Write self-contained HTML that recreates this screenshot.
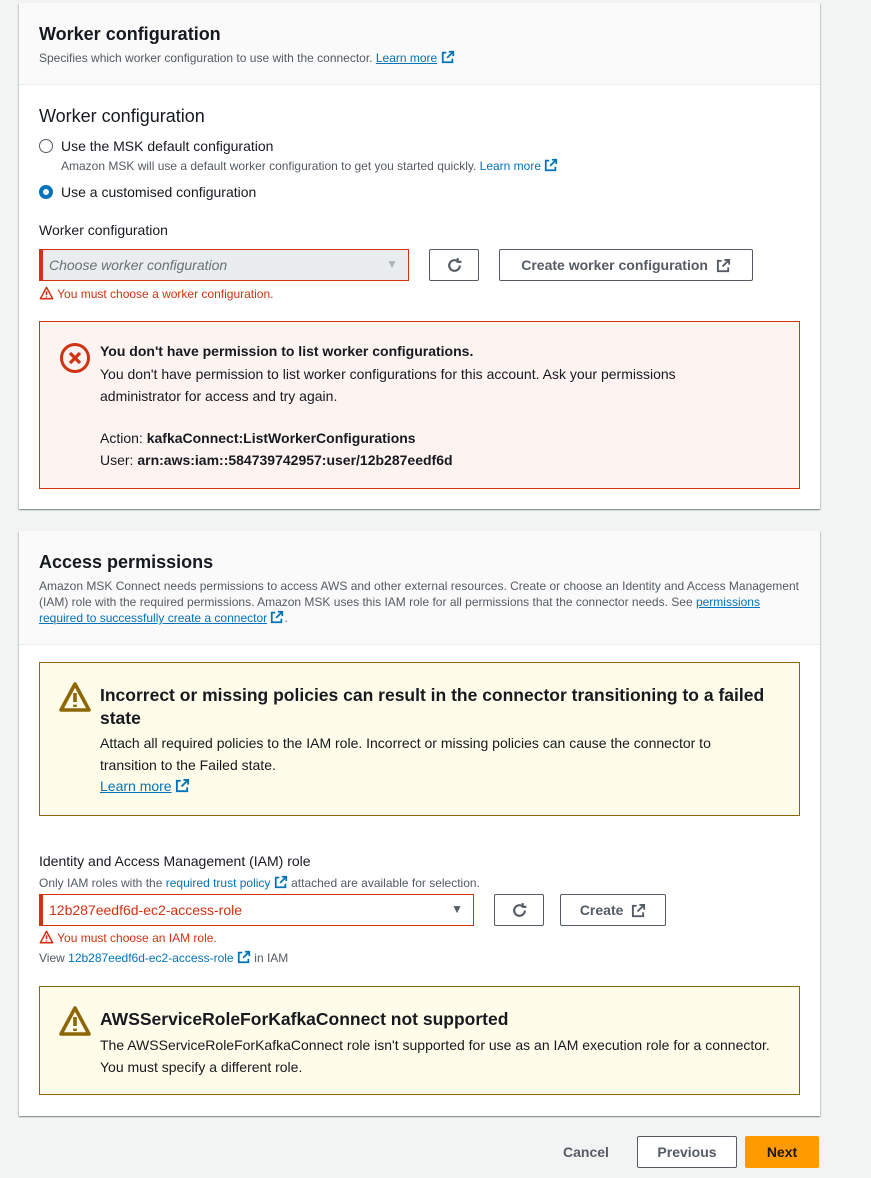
<!DOCTYPE html>
<html><head><meta charset="utf-8"><style>
*{box-sizing:border-box;margin:0;padding:0}
body{width:871px;height:1178px;background:#f2f3f3;font-family:"Liberation Sans",sans-serif;color:#16191f;position:relative;overflow:hidden;font-size:14px}
.a{position:absolute;white-space:nowrap}
.panel{position:absolute;left:19px;width:801px;background:#fff;box-shadow:0 1px 1px rgba(0,28,36,.3),1px 1px 1px rgba(0,28,36,.15),-1px 1px 1px rgba(0,28,36,.15)}
.hdr{position:absolute;left:0;top:0;width:100%;background:#fafafa;border-bottom:1px solid #eaeded}
.lnk{color:#0073bb;text-decoration:underline}
.lk{color:#0073bb}
.sm{font-size:12px;color:#545b64}
.btn{position:absolute;border:1px solid #545b64;border-radius:2px;background:#fff;font-weight:bold;color:#545b64;font-size:14px;display:flex;align-items:center;justify-content:center}
.err{color:#d13212;font-size:12px}
</style></head><body>
<svg width="0" height="0" style="position:absolute"><defs>
<symbol id="ext" viewBox="0 0 16 16"><path d="M9 2h5v5M14 2L7 9M6 3H2v11h11v-4" fill="none" stroke="currentColor" stroke-width="2"/></symbol>
<symbol id="ref" viewBox="0 0 16 16"><path d="M13 8a5 5 0 1 1-2-4M11 1v3.5h3.5" fill="none" stroke="currentColor" stroke-width="2"/></symbol>
<symbol id="warn" viewBox="0 0 16 16"><path d="M8 1.5L1 14.5h14z" fill="none" stroke="currentColor" stroke-width="1.8" stroke-linejoin="round"/><path d="M8 6v4.5M8 11.8v1.2" stroke="currentColor" stroke-width="1.8"/></symbol>
</defs></svg>

<div class="panel" style="top:3px;height:506px">
 <div class="hdr" style="height:82px"></div>
 <div class="a" style="left:20px;top:21px;font-size:18px;font-weight:bold">Worker configuration</div>
 <div class="a sm" style="left:20px;top:47px">Specifies which worker configuration to use with the connector. <span class="lnk">Learn more</span> <svg width="14" height="14" style="vertical-align:-2px;color:#0073bb"><use href="#ext"/></svg></div>
 <div class="a" style="left:20px;top:103px;font-size:18px">Worker configuration</div>
 <div class="a" style="left:20px;top:136px;width:14px;height:14px;border:1px solid #545b64;border-radius:50%"></div>
 <div class="a" style="left:42px;top:135px">Use the MSK default configuration</div>
 <div class="a sm" style="left:42px;top:155px">Amazon MSK will use a default worker configuration to get you started quickly. <span class="lk">Learn more</span> <svg width="14" height="14" style="vertical-align:-2px;color:#0073bb"><use href="#ext"/></svg></div>
 <div class="a" style="left:20px;top:182px;width:14px;height:14px;border:4px solid #0073bb;border-radius:50%"></div>
 <div class="a" style="left:42px;top:181px">Use a customised configuration</div>
 <div class="a" style="left:20px;top:219px">Worker configuration</div>
 <div class="a" style="left:20px;top:246px;width:370px;height:32px;background:#eaeded;border:1px solid #d13212;border-left:4px solid #d13212;font-style:italic;color:#687078;padding:7px 6px">Choose worker configuration<span style="position:absolute;right:10px;top:7px;font-style:normal;color:#aab7b8;font-size:12px">▼</span></div>
 <div class="btn" style="left:410px;top:246px;width:50px;height:32px"><svg width="17" height="17"><use href="#ref"/></svg></div>
 <div class="btn" style="left:480px;top:246px;width:254px;height:32px">Create worker configuration&nbsp;&nbsp;<svg width="15" height="15"><use href="#ext"/></svg></div>
 <div class="a err" style="left:20px;top:283px"><svg width="15" height="14" style="vertical-align:-2px;color:#d13212"><use href="#warn"/></svg> You must choose a worker configuration.</div>
 <div class="a" style="left:20px;top:318px;width:761px;height:168px;background:#fdf3f1;border:1px solid #d13212"></div>
 <svg class="a" style="left:40px;top:339px" width="32" height="32" viewBox="0 0 32 32"><circle cx="16" cy="16" r="13.5" fill="none" stroke="#d13212" stroke-width="3"/><path d="M11 11l10 10M21 11l-10 10" stroke="#d13212" stroke-width="3.2"/></svg>
 <div class="a" style="left:81px;top:340px;font-weight:bold">You don't have permission to list worker configurations.</div>
 <div class="a" style="left:81px;top:360px;line-height:22px;color:#16191f">You don't have permission to list worker configurations for this account. Ask your permissions<br>administrator for access and try again.</div>
 <div class="a" style="left:81px;top:427px">Action: <b>kafkaConnect:ListWorkerConfigurations</b></div>
 <div class="a" style="left:81px;top:449px">User: <b>arn:aws:iam::584739742957:user/12b287eedf6d</b></div>
</div>

<div class="panel" style="top:531px;height:585px">
 <div class="hdr" style="height:114px"></div>
 <div class="a" style="left:20px;top:21px;font-size:18px;font-weight:bold">Access permissions</div>
 <div class="a sm" style="left:20px;top:47px;line-height:16px;white-space:normal;width:765px">Amazon MSK Connect needs permissions to access AWS and other external resources. Create or choose an Identity and Access Management (IAM) role with the required permissions. Amazon MSK uses this IAM role for all permissions that the connector needs. See <span class="lnk">permissions required to successfully create a connector</span> <svg width="14" height="14" style="vertical-align:-2px;color:#0073bb"><use href="#ext"/></svg>.</div>
 <div class="a" style="left:20px;top:131px;width:761px;height:154px;background:#fffce9;border:1px solid #8d6605"></div>
 <svg class="a" style="left:40px;top:150px;color:#8d6605" width="32" height="32"><use href="#warn"/></svg>
 <div class="a" style="left:81px;top:153px;font-size:17.5px;font-weight:bold;line-height:23px">Incorrect or missing policies can result in the connector transitioning to a failed<br>state</div>
 <div class="a" style="left:81px;top:201px;line-height:22px">Attach all required policies to the IAM role. Incorrect or missing policies can cause the connector to<br>transition to the Failed state.</div>
 <div class="a" style="left:81px;top:247px"><span class="lnk">Learn more</span> <svg width="15" height="15" style="vertical-align:-2px;color:#0073bb"><use href="#ext"/></svg></div>
 <div class="a" style="left:20px;top:322px">Identity and Access Management (IAM) role</div>
 <div class="a sm" style="left:20px;top:344px">Only IAM roles with the <span class="lk">required trust policy</span> <svg width="14" height="14" style="vertical-align:-2px;color:#0073bb"><use href="#ext"/></svg> attached are available for selection.</div>
 <div class="a" style="left:20px;top:363px;width:435px;height:32px;border:1px solid #d13212;border-left:4px solid #d13212;color:#d13212;padding:7px 6px">12b287eedf6d-ec2-access-role<span style="position:absolute;right:10px;top:7px;color:#545b64;font-size:12px">▼</span></div>
 <div class="btn" style="left:475px;top:363px;width:50px;height:32px"><svg width="17" height="17"><use href="#ref"/></svg></div>
 <div class="btn" style="left:541px;top:363px;width:106px;height:32px">Create&nbsp;&nbsp;<svg width="15" height="15"><use href="#ext"/></svg></div>
 <div class="a err" style="left:20px;top:399px"><svg width="15" height="14" style="vertical-align:-2px;color:#d13212"><use href="#warn"/></svg> You must choose an IAM role.</div>
 <div class="a sm" style="left:20px;top:419px">View <span class="lk">12b287eedf6d-ec2-access-role</span> <svg width="14" height="14" style="vertical-align:-2px;color:#0073bb"><use href="#ext"/></svg> in IAM</div>
 <div class="a" style="left:20px;top:455px;width:761px;height:109px;background:#fffce9;border:1px solid #8d6605"></div>
 <svg class="a" style="left:40px;top:474px;color:#8d6605" width="32" height="32"><use href="#warn"/></svg>
 <div class="a" style="left:81px;top:478px;font-size:17.5px;font-weight:bold">AWSServiceRoleForKafkaConnect not supported</div>
 <div class="a" style="left:81px;top:503px;line-height:22px">The AWSServiceRoleForKafkaConnect role isn't supported for use as an IAM execution role for a connector.<br>You must specify a different role.</div>
</div>

<div class="a" style="left:563px;top:1144px;font-weight:bold;color:#545b64">Cancel</div>
<div class="btn" style="left:637px;top:1136px;width:100px;height:32px">Previous</div>
<div class="btn" style="left:745px;top:1136px;width:74px;height:32px;background:#ff9900;border-color:#ff9900;color:#16191f">Next</div>
</body></html>
